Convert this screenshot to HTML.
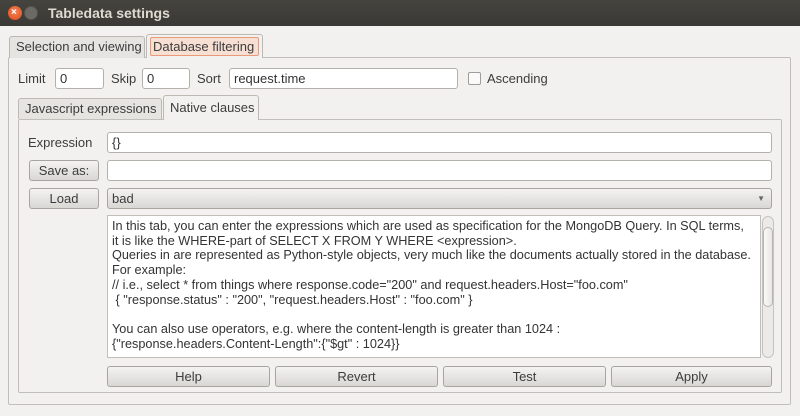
<!DOCTYPE html>
<html><head><style>
*{box-sizing:border-box;margin:0;padding:0}
body{width:800px;height:416px;background:#f2f1f0;font-family:"Liberation Sans",sans-serif;font-size:13px;color:#3c3c3c;position:relative;overflow:hidden}
.a{position:absolute}
.title{left:0;top:0;width:800px;height:26px;background:linear-gradient(#45443f,#3a3935);color:#dfdbd2;font-weight:bold;font-size:14px;line-height:26px;padding-left:48px}
.inp{position:absolute;background:#fff;border:1px solid #b4b1ac;border-radius:3px;height:21px;line-height:19px;padding-left:4px;color:#333}
.btn{position:absolute;border:1px solid #a8a5a0;border-radius:3px;background:linear-gradient(#f4f3f2,#d9d7d4);text-align:center;line-height:19px;height:21px;color:#3c3c3c}
.lbl{position:absolute;line-height:21px}
.tab{position:absolute;border:1px solid #bcb9b4;border-bottom:none;border-radius:3px 3px 0 0;background:#e6e4e1;line-height:20px;padding-left:6px}
.pane{position:absolute;border:1px solid #c2bfba;background:#f2f1f0;border-radius:2px}
</style></head><body>
<div class="a title">Tabledata settings</div>
<div class="a" style="left:8px;top:6px;width:14px;height:14px;border-radius:7px;background:radial-gradient(circle at 50% 40%,#f5845a,#dd4814);"></div>
<div class="a" style="left:11px;top:9px;font-size:10px;color:#fff;line-height:8px;font-weight:bold">×</div>
<div class="a" style="left:24px;top:6px;width:14px;height:14px;border-radius:7px;background:#6b6a65;border:1px solid #55544f"></div>

<div class="pane" style="left:8px;top:57px;width:783px;height:348px"></div>
<div class="tab" style="left:9px;top:36px;width:136px;height:22px">Selection and viewing</div>
<div class="tab" style="left:146px;top:34px;width:117px;height:24px;background:#f2f1f0;padding:2px 3px 0"><div style="background:#f7dfd4;border:1px solid #e89a79;border-radius:2px;line-height:17px;padding-left:2px">Database filtering</div></div>

<div class="lbl" style="left:18px;top:68px">Limit</div>
<div class="inp" style="left:55px;top:68px;width:49px">0</div>
<div class="lbl" style="left:111px;top:68px">Skip</div>
<div class="inp" style="left:142px;top:68px;width:48px">0</div>
<div class="lbl" style="left:197px;top:68px">Sort</div>
<div class="inp" style="left:229px;top:68px;width:229px">request.time</div>
<div class="a" style="left:468px;top:72px;width:13px;height:13px;border:1px solid #a09d98;border-radius:2px;background:#fafafa"></div>
<div class="lbl" style="left:487px;top:68px">Ascending</div>

<div class="pane" style="left:18px;top:119px;width:764px;height:274px"></div>
<div class="tab" style="left:18px;top:98px;width:144px;height:21px">Javascript expressions</div>
<div class="tab" style="left:163px;top:95px;width:96px;height:25px;background:#f2f1f0;line-height:24px;padding-left:6px">Native clauses</div>

<div class="lbl" style="left:28px;top:132px">Expression</div>
<div class="inp" style="left:107px;top:132px;width:665px">{}</div>
<div class="btn" style="left:29px;top:160px;width:70px">Save as:</div>
<div class="inp" style="left:107px;top:160px;width:665px"></div>
<div class="btn" style="left:29px;top:188px;width:70px">Load</div>
<div class="btn" style="left:107px;top:188px;width:665px;text-align:left;padding-left:4px">bad<span style="position:absolute;right:6px;top:0;font-size:8px;color:#666">▼</span></div>

<div class="a" style="left:107px;top:215px;width:654px;height:143px;background:#fff;border:1px solid #c2bfba;padding:3px 0 0 4px;line-height:14.7px;font-size:12.7px;white-space:pre;color:#333;overflow:hidden">In this tab, you can enter the expressions which are used as specification for the MongoDB Query. In SQL terms,
it is like the WHERE-part of SELECT X FROM Y WHERE &lt;expression&gt;.
Queries in are represented as Python-style objects, very much like the documents actually stored in the database.
For example:
// i.e., select * from things where response.code="200" and request.headers.Host="foo.com"
 { "response.status" : "200", "request.headers.Host" : "foo.com" }

You can also use operators, e.g. where the content-length is greater than 1024 :
{"response.headers.Content-Length":{"$gt" : 1024}}</div>
<div class="a" style="left:762px;top:216px;width:12px;height:142px;border:1px solid #c6c3be;border-radius:6px;background:#ebeae8"></div>
<div class="a" style="left:763px;top:227px;width:10px;height:80px;border:1px solid #b8b5b0;border-radius:5px;background:linear-gradient(90deg,#fafafa,#e8e6e3)"></div>

<div class="btn" style="left:107px;top:366px;width:163px">Help</div>
<div class="btn" style="left:275px;top:366px;width:163px">Revert</div>
<div class="btn" style="left:443px;top:366px;width:163px">Test</div>
<div class="btn" style="left:611px;top:366px;width:161px">Apply</div>
</body></html>
